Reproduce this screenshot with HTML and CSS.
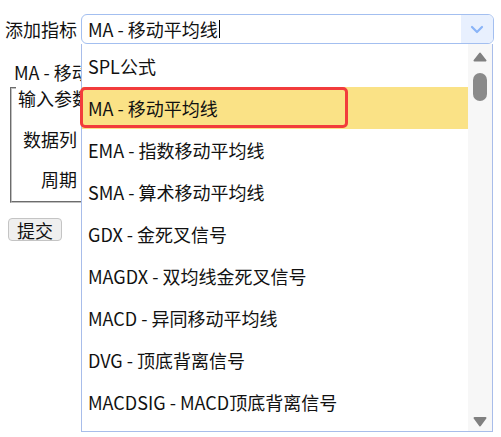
FILE: index.html
```html
<!DOCTYPE html>
<html lang="zh-CN">
<head>
<meta charset="utf-8">
<title>添加指标</title>
<link rel="stylesheet" href="styles.css">
</head>
<body>
<div class="page">
  <div class="toprow">
    <label class="lbl">添加指标</label>
    <div class="combo">
      <div class="combo-input"><span class="value">MA - 移动平均线</span><span class="caret"></span></div>
      <div class="combo-arrow">
        <svg width="14" height="9" viewBox="0 0 14 9"><path d="M2 2 L7 7 L12 2" fill="none" stroke="#8ab4f8" stroke-width="2.2" stroke-linecap="round" stroke-linejoin="round"/></svg>
      </div>
      <div class="dropdown">
        <ul class="options">
          <li class="opt">SPL公式</li>
          <li class="opt selected">MA - 移动平均线</li>
          <li class="opt">EMA - 指数移动平均线</li>
          <li class="opt">SMA - 算术移动平均线</li>
          <li class="opt">GDX - 金死叉信号</li>
          <li class="opt">MAGDX - 双均线金死叉信号</li>
          <li class="opt">MACD - 异同移动平均线</li>
          <li class="opt">DVG - 顶底背离信号</li>
          <li class="opt">MACDSIG - MACD顶底背离信号</li>
        </ul>
        <div class="scrollbar">
          <svg class="arr-up" width="14" height="10" viewBox="0 0 14 10"><path d="M7 1.5 L12.5 8.5 L1.5 8.5 Z" fill="#808080" stroke="#808080" stroke-width="2" stroke-linejoin="round"/></svg>
          <span class="thumb"></span>
          <span class="track-space"></span>
          <svg class="arr-down" width="14" height="11" viewBox="0 0 14 11"><path d="M1.5 2 L12.5 2 L7 9.5 Z" fill="#808080" stroke="#808080" stroke-width="2" stroke-linejoin="round"/></svg>
        </div>
      </div>
    </div>
  </div>
  <div class="panel">
    <div class="title">MA - 移动平均线</div>
    <fieldset class="params">
      <legend class="legend">输入参数</legend>
      <div class="row"><span class="plabel">数据列</span></div>
      <div class="row"><span class="plabel">周期</span></div>
    </fieldset>
    <button class="submit" type="button">提交</button>
  </div>
</div>
</body>
</html>
```

FILE: styles.css
```css
html, body {
  margin: 0;
  padding: 0;
  height: 100%;
  background: #ffffff;
}

body {
  font-family: "Noto Sans CJK SC", "Noto Sans", sans-serif;
  font-size: 18px;
  color: #111111;
}

.page {
  min-height: 100%;
  box-sizing: border-box;
  padding-top: 14px;
}

.toprow {
  display: flex;
  align-items: center;
  padding-left: 5px;
}

.lbl {
  width: 76px;
  line-height: 24px;
}

.combo {
  position: relative;
  width: 413px;
  height: 30px;
  box-sizing: border-box;
  border: 1px solid #a3bff0;
  border-radius: 6px;
  display: flex;
  align-items: stretch;
}

.combo-input {
  flex: 1;
  display: flex;
  align-items: center;
  padding-left: 6px;
  white-space: nowrap;
}

.caret {
  display: inline-block;
  width: 0;
  height: 18px;
  border-left: 1px solid #000000;
  margin-left: 1px;
}

.combo-arrow {
  width: 32px;
  background: #e8f0fe;
  border-radius: 0 5px 5px 0;
  display: flex;
  align-items: center;
  justify-content: center;
}

.dropdown {
  position: absolute;
  top: 29px;
  left: -1px;
  width: 412px;
  height: 388px;
  box-sizing: border-box;
  background: #ffffff;
  border: 1px solid #a8bdea;
  border-top: none;
  display: flex;
  z-index: 10;
}

.options {
  list-style: none;
  margin: 0;
  padding: 1px 0 0 0;
  flex: 1;
  min-width: 0;
}

.opt {
  height: 42px;
  line-height: 42px;
  padding-left: 6px;
  white-space: nowrap;
  color: #111111;
}

.opt.selected {
  position: relative;
  background: #fae286;
}

.opt.selected::after {
  content: "";
  position: absolute;
  left: -2px;
  top: 0;
  width: 268px;
  height: 41px;
  box-sizing: border-box;
  border: 3px solid #f23c3c;
  border-radius: 5px;
}

.scrollbar {
  width: 24px;
  background: #f7f7f7;
  display: flex;
  flex-direction: column;
  align-items: center;
  padding: 8px 0 4px 0;
  box-sizing: border-box;
}

.arr-up {
  display: block;
}

.thumb {
  display: block;
  width: 14px;
  height: 28px;
  margin-top: 11px;
  border-radius: 7px;
  background: #8a8a8a;
}

.track-space {
  flex: 1;
}

.arr-down {
  display: block;
}

.panel {
  padding-left: 8px;
}

.title {
  margin-top: 18px;
  padding-left: 6px;
  line-height: 20px;
}

.params {
  margin: 0 0 0 2px;
  width: 300px;
  padding: 25px 0 2px 4px;
  border: 2px groove #c0c0c0;
}

.legend {
  padding: 0 2px;
  line-height: 12px;
  transform: translateY(10px);
}

.row {
  height: 40px;
  display: flex;
  align-items: center;
}

.plabel {
  width: 61px;
  text-align: right;
}

.submit {
  display: block;
  margin-top: 15px;
  font-family: "Noto Sans CJK SC", "Noto Sans", sans-serif;
  font-size: 18px;
  line-height: 20px;
  padding: 0 8px;
  height: 23px;
  background: #efefef;
  color: #111111;
  border: 1px solid #c4c4c4;
  border-radius: 4px;
}
```
